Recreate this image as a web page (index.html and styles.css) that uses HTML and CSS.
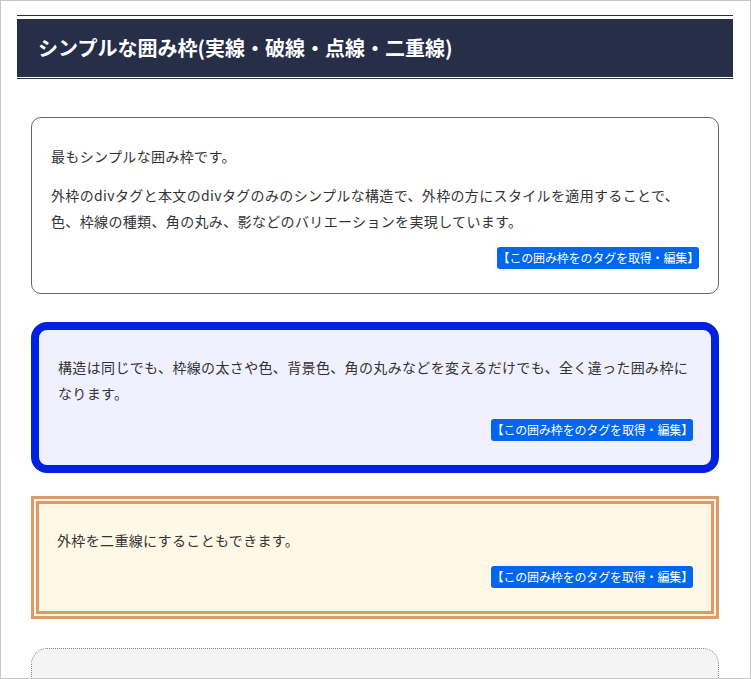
FILE: index.html
```html
<!DOCTYPE html>
<html lang="ja">
<head>
<meta charset="utf-8">
<title>シンプルな囲み枠</title>
<link rel="stylesheet" href="styles.css">
</head>
<body>
<div class="frame">
  <div class="heading">
    <h2 class="heading-inner">シンプルな囲み枠(実線・破線・点線・二重線)</h2>
  </div>

  <div class="box box-simple">
    <p>最もシンプルな囲み枠です。</p>
    <p>外枠のdivタグと本文のdivタグのみのシンプルな構造で、外枠の方にスタイルを適用することで、<br>色、枠線の種類、角の丸み、影などのバリエーションを実現しています。</p>
    <div class="actions"><a class="tag-btn" href="#">【この囲み枠をのタグを取得・編集】</a></div>
  </div>

  <div class="box box-thick">
    <p>構造は同じでも、枠線の太さや色、背景色、角の丸みなどを変えるだけでも、全く違った囲み枠になります。</p>
    <div class="actions"><a class="tag-btn" href="#">【この囲み枠をのタグを取得・編集】</a></div>
  </div>

  <div class="box box-double">
    <p>外枠を二重線にすることもできます。</p>
    <div class="actions"><a class="tag-btn" href="#">【この囲み枠をのタグを取得・編集】</a></div>
  </div>

  <div class="box box-dotted">
    <p>点線の囲み枠です。</p>
  </div>
</div>
</body>
</html>
```

FILE: styles.css
```css
html, body {
  margin: 0;
  padding: 0;
  background: #fff;
}

body {
  font-family: "Noto Sans CJK JP", "Noto Sans", sans-serif;
  color: #333;
  font-size: 14px;
  line-height: 26px;
  letter-spacing: 0.35px;
}

.frame {
  box-sizing: border-box;
  width: 751px;
  height: 679px;
  overflow: hidden;
  border: 1px solid #c6c6c6;
  padding: 14px 17px 0 16px;
}

.heading {
  border-top: 1px solid #262e48;
  border-bottom: 1px solid #262e48;
  padding: 3px 0 1px;
}

.heading-inner {
  margin: 0;
  background: #262e48;
  color: #fff;
  font-size: 20px;
  font-weight: bold;
  line-height: 58px;
  padding: 0 21px;
  letter-spacing: 0;
}

.box {
  margin: 0 14px;
  padding: 12px 19px 24px;
}

.box p {
  margin: 13px 0;
}

.actions {
  display: flex;
  justify-content: flex-end;
  margin-top: 1px;
}

.tag-btn {
  display: inline-block;
  background: #0066ee;
  color: #fff;
  text-decoration: none;
  font-size: 12px;
  line-height: 22px;
  padding: 0 0 0 1px;
  border-radius: 3px;
  letter-spacing: -0.15px;
}

.box-simple {
  margin-top: 38px;
  border: 1px solid #666;
  border-radius: 10px;
}

.box-thick {
  margin-top: 28px;
  border: 8px solid #0022dd;
  border-radius: 16px;
  background: #f0f0ff;
  padding: 11px 18px 24px 19px;
}

.box-thick .actions {
  margin-top: 2px;
}

.box-double {
  margin-top: 23px;
  border: 8px double #dd9966;
  background: #fff8e6;
  padding: 10px 18px 23px 18px;
}

.box-double .actions {
  margin-top: 0;
}

.box-dotted {
  margin-top: 29px;
  border: 1px dotted #888;
  border-radius: 16px;
  background: #f4f4f4;
}
```
